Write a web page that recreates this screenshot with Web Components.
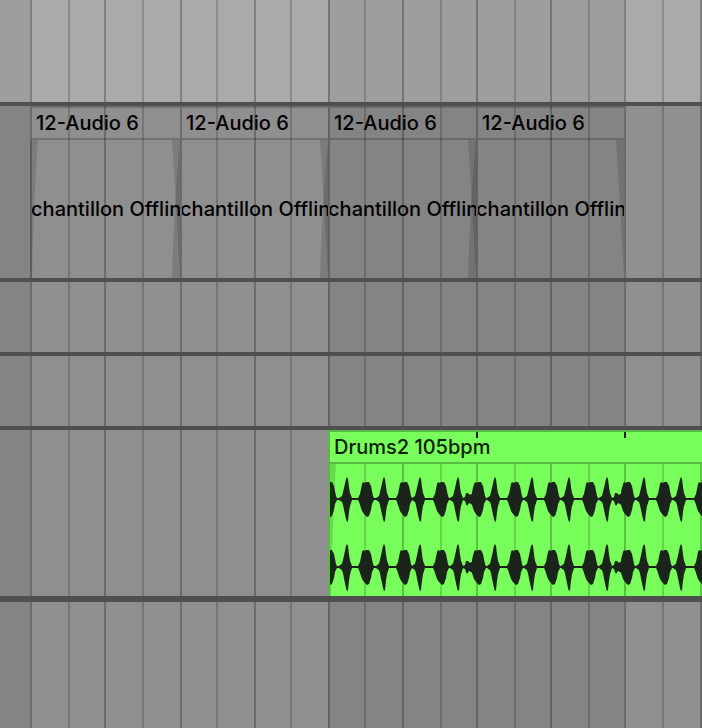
<!DOCTYPE html>
<html lang="fr">
<head>
<meta charset="utf-8">
<title>Arrangement</title>
<style>
  body {
    margin: 0;
    background: #4f4f4f;
    color: #000;
    font-family: Inter, "Liberation Sans", sans-serif;
    font-size: 20px;
    font-weight: 500;
    line-height: 30px;
  }
</style>
</head>
<body>
<arrangement-view>
  <track-lane size="ruler"></track-lane>
  <track-lane size="large">
    <offline-clip from="1" to="5" name="12-Audio 6" fade-in fade-cross></offline-clip>
    <offline-clip from="5" to="9" name="12-Audio 6" fade-cross></offline-clip>
    <offline-clip from="9" to="13" name="12-Audio 6" fade-cross></offline-clip>
    <offline-clip from="13" to="17" name="12-Audio 6"></offline-clip>
  </track-lane>
  <track-lane size="small"></track-lane>
  <track-lane size="small"></track-lane>
  <track-lane size="audio">
    <audio-clip from="9" to="20" name="Drums2 105bpm"></audio-clip>
  </track-lane>
  <track-lane size="rest"></track-lane>
</arrangement-view>

<script>
// Relative width of every half beat, from the left edge of the view
const beats = [30, 38, 36, 38, 38, 36, 38, 36, 38, 36, 38, 38, 36, 38, 36, 38, 36, 38, 38, 2];

const columns = (from = 0, to = beats.length) =>
    beats.slice(from, to).map((beat) => `minmax(0, ${beat}fr)`).join(' ');

const isShaded = (index) => index === 0 || (index > 8 && index < 17);

const placeInLane = (element) => {
    const from = Number(element.getAttribute('from'));
    const to = Number(element.getAttribute('to'));
    element.style.gridColumn = `${from + 1} / ${to + 1}`;
    return { from, to };
};

class ArrangementView extends HTMLElement {
    constructor() {
        super();
        this.attachShadow({ mode: 'open' }).innerHTML = `
          <style>
            :host {
              display: flex;
              flex-direction: column;
              gap: 4px;
              min-height: 100vh;
              overflow: hidden;
            }
          </style>
          <slot></slot>
        `;
    }
}

// Vertical beat lines, optionally with the alternating bar shade
class BeatGrid extends HTMLElement {
    connectedCallback() {
        const from = Number(this.getAttribute('from') || 0);
        const to = Number(this.getAttribute('to') || beats.length);
        const shade = this.hasAttribute('shade');
        let cells = '';
        for (let i = from; i < to; i++) {
            const names = [i === 0 ? 'none' : i % 2 ? 'strong' : 'weak'];
            if (shade && isShaded(i)) names.push('shaded');
            cells += `<i class="${names.join(' ')}"></i>`;
        }
        this.attachShadow({ mode: 'open' }).innerHTML = `
          <style>
            :host { display: grid; grid-template-columns: ${columns(from, to)}; }
            i { box-sizing: border-box; border-left: 2px solid transparent; }
            .shaded { background: rgba(0, 0, 0, .07); }
            .strong { border-left-color: rgba(0, 0, 0, .25); }
            .weak { border-left-color: rgba(0, 0, 0, .17); }
            .none { border: none; }
          </style>
          ${cells}
        `;
    }
}

class TrackLane extends HTMLElement {
    constructor() {
        super();
        this.attachShadow({ mode: 'open' }).innerHTML = `
          <style>
            :host {
              display: grid;
              grid-template-columns: ${columns()};
              grid-template-rows: 1fr;
              background: #8f8f8f;
            }
            :host([size="ruler"]) { height: 102px; background: #aaa; }
            :host([size="large"]) { height: 172px; }
            :host([size="small"]) { height: 70px; }
            :host([size="audio"]) { height: 166px; }
            :host([size="rest"]) { flex: 1; min-height: 70px; margin-top: 2px; }
            beat-grid { grid-row: 1; grid-column: 1 / -1; }
            ::slotted(*) { grid-row: 1; }
          </style>
          <beat-grid shade></beat-grid>
          <slot></slot>
        `;
    }
}

class OfflineClip extends HTMLElement {
    connectedCallback() {
        placeInLane(this);
        const fades = [];
        if (this.hasAttribute('fade-in')) {
            fades.push('<svg class="start" viewBox="0 0 8 138" preserveAspectRatio="none"><path d="M0 0H8Q4 50 2 138H0Z"/></svg>');
        }
        const cross = this.hasAttribute('fade-cross') ? '<path d="M8 0Q2 62 0 138H8Z"/>' : '';
        fades.push(`<svg class="end" viewBox="0 0 8 138" preserveAspectRatio="none"><path d="M0 0Q4 62 8 138V0Z"/>${cross}</svg>`);
        this.attachShadow({ mode: 'open' }).innerHTML = `
          <style>
            :host {
              display: flex;
              flex-direction: column;
              position: relative;
              min-width: 0;
              white-space: nowrap;
            }
            header {
              height: 30px;
              margin-left: 2px;
              padding-left: 4px;
              border: solid rgba(0, 0, 0, .2);
              border-width: 2px 0;
              overflow: hidden;
            }
            .body {
              flex: 1;
              display: flex;
              align-items: center;
              justify-content: center;
              margin-left: 2px;
              overflow: hidden;
            }
            .body span { position: relative; }
            svg { position: absolute; top: 34px; height: calc(100% - 34px); fill: #000; fill-opacity: .13; }
            .start { left: 0; width: 8px; }
            .end { right: 0; width: 8px; }
          </style>
          <header>${this.getAttribute('name')}</header>
          ${fades.join('')}
          <div class="body"><span>Échantillon Offline</span></div>
        `;
    }
}

// Drum hits: [time, kind], times are in the units of the clip's own width
const hits = [
    [-1, 'kick'], [17, 'snare'], [36, 'kick'], [54, 'snare'], [74, 'kick'], [90, 'snare'],
    [111, 'kick'], [128, 'snare'], [139, 'ghost'], [148, 'kick'], [165, 'snare'],
    [185, 'kick'], [202, 'snare'], [222, 'kick'], [239, 'snare'], [260, 'kick'], [277, 'snare'],
    [288, 'ghost'], [297, 'kick'], [314, 'snare'], [334, 'kick'], [351, 'snare'], [372, 'kick'],
];
const shapes = {
    kick: [[-8, -1], [-6, -5], [-5, -10], [-4, -15], [-3, -17], [-1, -16], [0, -17], [3, -17], [5, -13], [6, -8], [7, -3], [8, -1],
        [8, 1], [6, 5], [5, 11], [3, 17], [1, 18], [-2, 15], [-4, 12], [-6, 6], [-7, 3], [-8, 1]],
    snare: [[-8, -1], [-5, -3], [-4, -7], [-3, -11], [-1, -20], [0, -22], [1, -20], [2, -12], [3, -6], [5, -1],
        [5, 1], [3, 7], [2, 13], [1, 22], [0, 23], [-1, 20], [-3, 11], [-4, 6], [-5, 3], [-8, 1]],
    ghost: [[-6, -1], [-4, -2], [-3, -6], [-1, -6], [1, -4], [2, -5], [3, -5], [4, -12], [7, -13], [7, 12], [4, 6], [2, 5], [0, 4],
        [-2, 7], [-3, 5], [-4, 2], [-6, 1]],
};

const channel = (middle, peak) => hits
    .map(([time, kind]) => {
        const gain = kind === 'snare' ? peak : 1;
        return `<polygon points="${shapes[kind].map(([x, y]) => `${time + x},${middle + y * gain}`).join(' ')}"/>`;
    })
    .join('') + `<rect y="${middle - 1}" width="372" height="2"/>`;

class AudioClip extends HTMLElement {
    connectedCallback() {
        const { from, to } = placeInLane(this);
        this.attachShadow({ mode: 'open' }).innerHTML = `
          <style>
            :host {
              display: grid;
              grid-template-columns: ${columns(from, to)};
              grid-template-rows: 34px 1fr;
              min-width: 0;
              background: #79ff5b;
              color: #0c200c;
              white-space: nowrap;
              overflow: hidden;
            }
            header {
              grid-area: 1 / 1 / 2 / -1;
              padding-left: 6px;
              border: solid #58b943;
              border-width: 2px 0;
            }
            .mark { grid-row: 1; width: 2px; height: 6px; margin-top: 2px; background: #172417; }
            beat-grid, .wave { grid-area: 2 / 1 / 3 / -1; }
            .wave { width: calc(100% - 2px); height: 100%; margin-left: 2px; fill: #1a241a; }
            .fade { fill: #000; fill-opacity: .14; }
            .edge { grid-area: 1 / 1 / 3 / 2; width: 2px; background: #58b943; }
          </style>
          <header>${this.getAttribute('name')}</header>
          <i class="mark" style="grid-column: 5"></i>
          <i class="mark" style="grid-column: 9"></i>
          <beat-grid from="${from}" to="${to}"></beat-grid>
          <svg class="wave" viewBox="0 0 372 132" preserveAspectRatio="none">
            <path class="fade" d="M0 0H6Q3 50 1 132H0Z"/>
            ${channel(35, 1)}${channel(103, 1.05)}
          </svg>
          <i class="edge"></i>
        `;
    }
}

customElements.define('arrangement-view', ArrangementView);
customElements.define('beat-grid', BeatGrid);
customElements.define('track-lane', TrackLane);
customElements.define('offline-clip', OfflineClip);
customElements.define('audio-clip', AudioClip);
</script>
</body>
</html>
